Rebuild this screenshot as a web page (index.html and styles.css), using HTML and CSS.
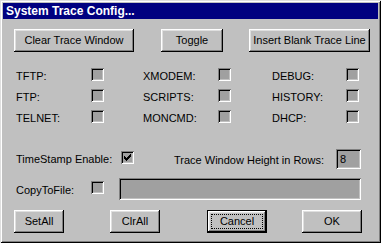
FILE: index.html
```html
<!DOCTYPE html>
<html>
<head>
<meta charset="utf-8">
<link rel="stylesheet" href="styles.css">
</head>
<body>
<div class="window">
  <div class="titlebar">System Trace Config...</div>
  <div class="content">
    <div class="toprow">
      <div class="btn w-clear">Clear Trace Window</div>
      <div class="btn w-toggle">Toggle</div>
      <div class="btn w-insert">Insert Blank Trace Line</div>
    </div>
    <div class="grid">
      <div class="lbl">TFTP:</div><div class="cb"></div>
      <div class="lbl">XMODEM:</div><div class="cb"></div>
      <div class="lbl">DEBUG:</div><div class="cb"></div>
      <div class="lbl">FTP:</div><div class="cb"></div>
      <div class="lbl">SCRIPTS:</div><div class="cb"></div>
      <div class="lbl">HISTORY:</div><div class="cb"></div>
      <div class="lbl">TELNET:</div><div class="cb"></div>
      <div class="lbl">MONCMD:</div><div class="cb"></div>
      <div class="lbl">DHCP:</div><div class="cb"></div>
    </div>
    <div class="tsrow">
      <div class="lbl ts-lbl">TimeStamp Enable:</div>
      <div class="cb ts-cb"><svg width="7" height="7" viewBox="0 0 7 7" shape-rendering="crispEdges"><path d="M6 0h1v3h-1zM5 1h1v3h-1zM4 2h1v3h-1zM3 3h1v3h-1zM2 4h1v3h-1zM1 3h1v3h-1zM0 2h1v3h-1z" fill="#000"/></svg></div>
      <div class="lbl rows-lbl">Trace Window Height in Rows:</div>
      <div class="field rows-field">8</div>
    </div>
    <div class="copyrow">
      <div class="lbl copy-lbl">CopyToFile:</div>
      <div class="cb copy-cb"></div>
      <div class="field file-field"></div>
    </div>
    <div class="bottomrow">
      <div class="btn w-small">SetAll</div>
      <div class="btn w-small clr">ClrAll</div>
      <div class="btn w-big cancel default">Cancel</div>
      <div class="btn w-big ok">OK</div>
    </div>
  </div>
</div>
</body>
</html>
```

FILE: styles.css
```css
* { box-sizing: border-box; }
html, body { margin: 0; padding: 0; background: #c0c0c0; }
body {
  font-family: "Liberation Sans", Arial, sans-serif;
  font-size: 11px;
  color: #000;
}
.window {
  width: 381px;
  height: 243px;
  padding: 3px;
  background: #c0c0c0;
  box-shadow: inset 1px 1px #dfdfdf, inset -1px -1px #000, inset 2px 2px #fff, inset -2px -2px #808080;
}
.titlebar {
  height: 16px;
  background: #000080;
  color: #fff;
  font-weight: bold;
  font-size: 12px;
  line-height: 16px;
  padding-left: 3px;
  white-space: nowrap;
}
.content {
  padding: 10px 0 0 11px;
}
.btn {
  height: 23px;
  background: #c0c0c0;
  box-shadow: inset -1px -1px #000, inset 1px 1px #fff, inset -2px -2px #808080, inset 2px 2px #dfdfdf;
  display: flex;
  align-items: center;
  justify-content: center;
  line-height: 13px;
  padding-bottom: 1px;
  white-space: nowrap;
}
.toprow { display: flex; }
.w-clear { width: 120px; }
.w-toggle { width: 62px; margin-left: 27px; }
.w-insert { width: 121px; margin-left: 26px; }

.grid {
  margin: 16px 0 0 2px;
  display: grid;
  grid-template-columns: 75px 52px 75px 54px 74px 13px;
  grid-auto-rows: 13px;
  row-gap: 8px;
}
.lbl {
  height: 13px;
  line-height: 13px;
  padding-top: 2px;
  white-space: nowrap;
}
.cb {
  width: 13px;
  height: 13px;
  background: #a0a0a0;
  box-shadow: inset 1px 1px #808080, inset -1px -1px #fff, inset 2px 2px #000, inset -2px -2px #c0c0c0;
  display: flex;
  align-items: center;
  justify-content: center;
}
.field {
  background: #a0a0a0;
  box-shadow: inset 1px 1px #808080, inset -1px -1px #fff, inset 2px 2px #000, inset -2px -2px #c0c0c0;
}
.tsrow {
  display: flex;
  align-items: flex-start;
  margin-top: 26px;
  padding-left: 2px;
}
.ts-lbl { width: 105px; margin-top: 2px; }
.ts-cb { margin-top: 2px; }
.rows-lbl { margin-left: 40px; width: 162px; margin-top: 3px; }
.rows-field {
  width: 25px;
  height: 20px;
  line-height: 20px;
  padding-left: 4px;
}
.copyrow {
  display: flex;
  align-items: flex-start;
  margin-top: 9px;
  padding-left: 2px;
}
.copy-lbl { width: 75px; margin-top: 4px; }
.copy-cb { margin-top: 3px; }
.file-field { width: 242px; height: 22px; margin-left: 15px; }
.bottomrow {
  display: flex;
  margin-top: 10px;
}
.w-small { width: 50px; }
.clr { margin-left: 46px; }
.w-big { width: 60px; }
.cancel { margin-left: 47px; }
.ok { margin-left: 35px; }
.default {
  box-shadow: inset 0 0 0 1px #000, inset -2px -2px #000, inset 2px 2px #fff, inset -3px -3px #808080, inset 3px 3px #dfdfdf;
  outline: 1px dotted #000;
  outline-offset: -5px;
}
```
